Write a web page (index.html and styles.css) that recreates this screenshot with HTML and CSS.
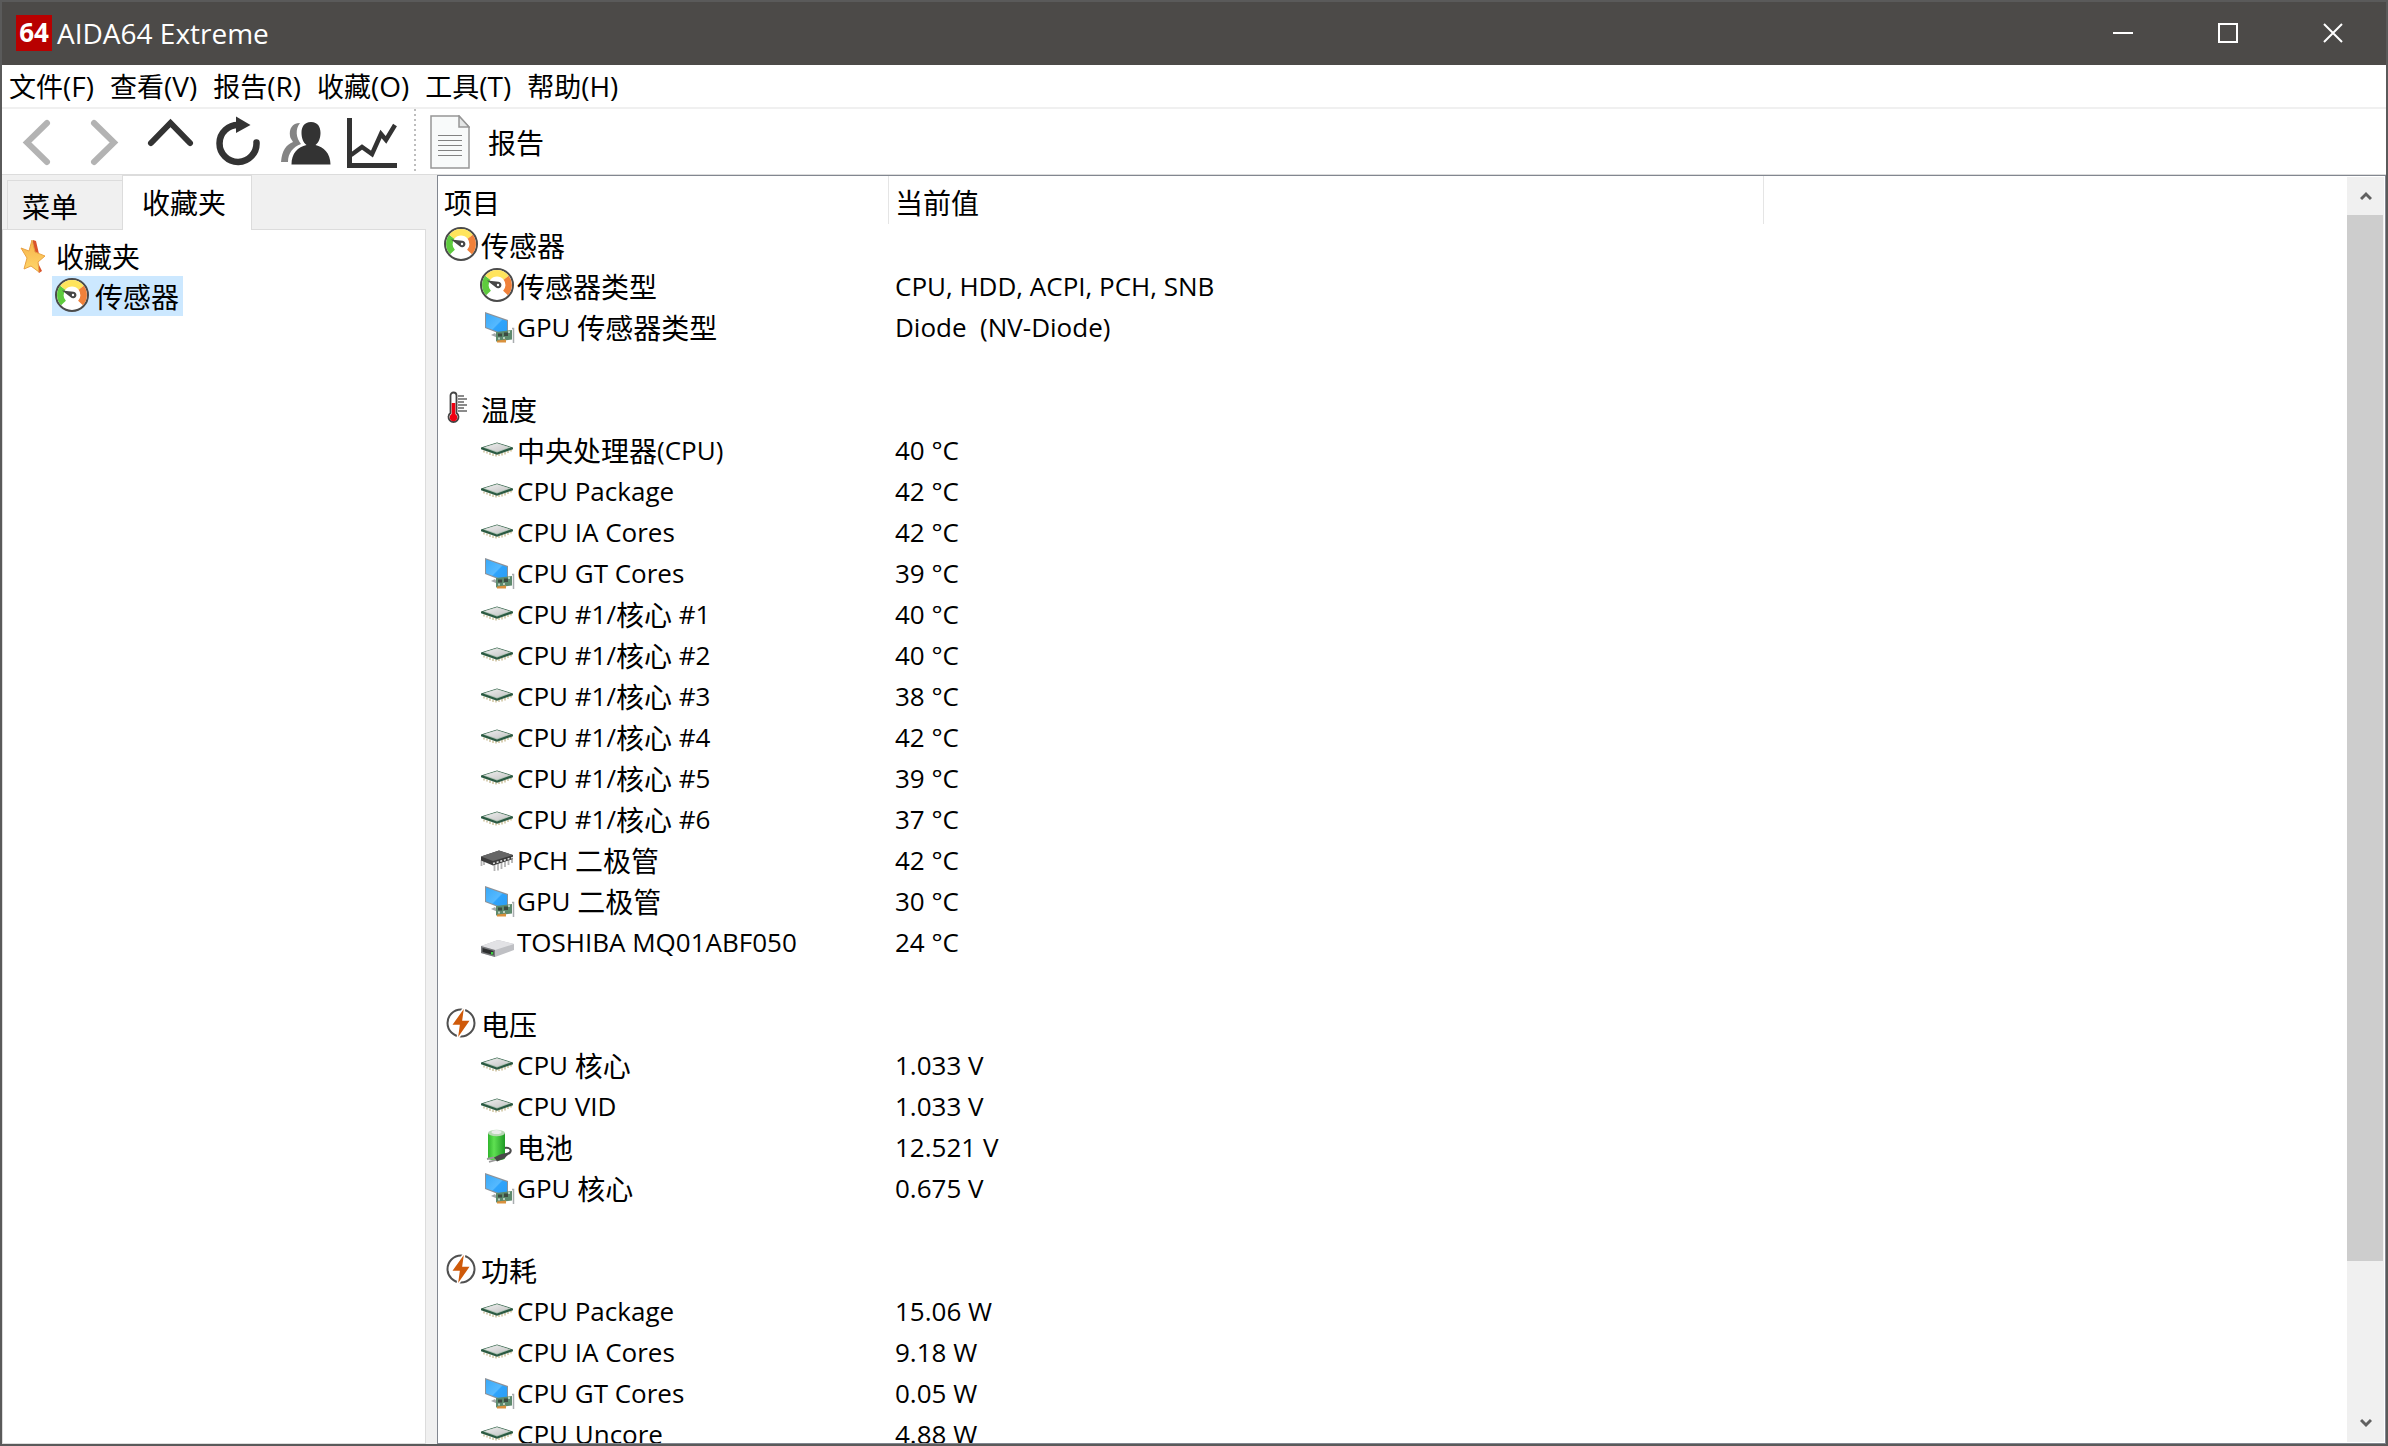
FILE: index.html
```html
<!DOCTYPE html>
<html lang="zh-CN">
<head>
<meta charset="utf-8">
<title>AIDA64 Extreme</title>
<link rel="stylesheet" href="styles.css">
</head>
<body>
<svg class="sprite" aria-hidden="true">
  <defs>
    <linearGradient id="screen" x1="0" y1="0" x2="1" y2="1"><stop offset="0" stop-color="#3aa9f7"/><stop offset=".5" stop-color="#55b9ff"/><stop offset=".55" stop-color="#2ea3fb"/><stop offset="1" stop-color="#2c9df5"/></linearGradient>
    <linearGradient id="starfill" x1="0" y1="0" x2="0" y2="1"><stop offset="0" stop-color="#f6b24a"/><stop offset="1" stop-color="#ffd76a"/></linearGradient>
    <linearGradient id="cell" x1="0" y1="0" x2="1" y2="0"><stop offset="0" stop-color="#2fb52c"/><stop offset=".35" stop-color="#5fe052"/><stop offset="1" stop-color="#1f9a25"/></linearGradient>
    <linearGradient id="lid" x1="0" y1="0" x2="1" y2="1"><stop offset="0" stop-color="#eeeeee"/><stop offset="1" stop-color="#c4c4c4"/></linearGradient>
  </defs>
  <symbol id="gauge" viewBox="0 0 36 36">
    <circle cx="18" cy="17" r="16" fill="#fff" stroke="#4b4b4b" stroke-width="2"/>
    <g fill="none" stroke-width="6.500">
      <path d="M9.500 25A11.700 11.700 0 0 1 8.800 9.800" stroke="#5ecb3e"/>
      <path d="M8.800 9.800A11.700 11.700 0 0 1 27.200 9.800" stroke="#ffe45c"/>
      <path d="M27.200 9.800A11.700 11.700 0 0 1 26.500 25" stroke="#f0813a"/>
    </g>
    <path d="M8 12.500l11.500 1.200a3.300 3.300 0 1 1-2.800 5.500z" fill="#474747"/>
    <circle cx="19" cy="17" r="1.200" fill="#fff"/>
  </symbol>
  <symbol id="gpu" viewBox="0 0 36 36">
    <path d="M6 3l23 8v17L6 19z" fill="#8d9299"/>
    <path d="M7 4.600l21 7.300v14.400L7 18.200z" fill="url(#screen)"/>
    <path d="M16 24l-4 2 7 3z" fill="#a5a8ab"/>
    <path d="M17 23l16-2v9.500l-16 2z" fill="#5d8a6d"/>
    <path d="M19 24.500h4v3h-4zM25 23.500h4v3.500h-4z" fill="#3c4a41"/>
    <path d="M19 28.500h2v2h-2zM24 28h2v2h-2zM29 22h2v2h-2z" fill="#b9cdbf"/>
    <path d="M18 31.500l9-1v3h-9z" fill="#d9913d"/>
    <path d="M33 19.500h1.500v14.500" fill="none" stroke="#a9adb0" stroke-width="1.500"/>
  </symbol>
  <symbol id="cpu" viewBox="0 0 36 36">
    <path d="M5 18.500v2M8 19.500v2M11 20.500v2.500M14 21.500v2.500M17 22v2.500M20 22v2M23 21v2.500M26 20v2.500M29 19v2M32 17.500v2" stroke="#b5a36c"/>
    <path d="M2 15.500l16-5 16 5v1.800l-16 5.500-16-5.500z" fill="#2b5a42"/>
    <path d="M4 15.500l14-4.600 14 4.600-14 4.900z" fill="#a9bfb0"/>
    <path d="M5.500 15.300l12.500-3.900 12.500 3.900-12.500 4.200z" fill="url(#lid)"/>
  </symbol>
  <symbol id="chip" viewBox="0 0 36 36">
    <path d="M2.500 18v6M5 19v4M15.500 22v7M19 21v7.500M22.500 20v7M26 18.500v6.500M29.500 17v6M33 15v6" stroke="#b3b3b3" stroke-width="1.800"/>
    <path d="M2 14.500L20 8.500l14 4.500v4L14 23.500 2 18.500z" fill="#3c3c3c"/>
    <path d="M2 14.500L20 8.500l14 4.500-20 6z" fill="#666"/>
    <path d="M14 21.500l20-6" stroke="#e2e2e2" stroke-width="1.500" stroke-dasharray="2 1.800"/>
  </symbol>
  <symbol id="disk" viewBox="0 0 36 36">
    <path d="M2 22l17-6 16 4v6l-19 7-14-4z" fill="#bfc0c4"/>
    <path d="M2 22l17-6 16 4-19 6z" fill="#e2e2e5"/>
    <path d="M2 22l14 4v7l-14-4z" fill="#77797c"/>
    <path d="M3.500 24l11 3v4l-11-3z" fill="#2d2f30"/>
    <path d="M12 28h2v2.500h-2z" fill="#3bd13f"/>
  </symbol>
  <symbol id="bolt" viewBox="0 0 36 36">
    <circle cx="18" cy="17" r="13.500" fill="none" stroke="#505050" stroke-width="2"/>
    <path d="M22 0L8 19.500h8L14 34l14-20h-8z" fill="#cf5a0a" stroke="#fff" stroke-width="1.500"/>
  </symbol>
  <symbol id="battery" viewBox="0 0 36 36">
    <path d="M25 19c8-1 9 4 2 7" fill="none" stroke="#4b4b4b" stroke-width="2"/>
    <path d="M9 4h17v25a8.500 2.500 0 0 1-17 0z" fill="url(#cell)"/>
    <ellipse cx="17.500" cy="4" rx="8.500" ry="3.200" fill="#b9d8b6"/>
    <ellipse cx="17.500" cy="3" rx="5" ry="2" fill="#ececec"/>
    <path d="M31 23l-5 6-8 3.500-3-4 6-3z" fill="#484848"/>
    <path d="M15 28.500l-7 1.500M17 31l-7 1.800" stroke="#999" stroke-width="1.800"/>
  </symbol>
  <symbol id="thermometer" viewBox="0 0 36 36">
    <path d="M7.500 22V4.500a3 3 0 0 1 6 0V22a5 5 0 1 1-6 0z" fill="#fff" stroke="#444" stroke-width="1.800"/>
    <path d="M10.500 12v14" stroke="#f00010" stroke-width="3.600"/>
    <circle cx="10.500" cy="26.500" r="3.700" fill="#f00010"/>
    <path d="M15 5h6M15 8h9M15 11h6M15 14h9M15 17h6M15 20h9" stroke="#666" stroke-width="1.400"/>
  </symbol>
  <symbol id="star" viewBox="0 0 28 36">
    <path d="M14 2l3 1 3 13-1 9 4 8-3 2-6-12z" fill="#d9532b"/>
    <path d="M13 2l3 12 10 4-7 6 1 10-8-6-7 3 3-11-6-10 8 3z" fill="url(#starfill)" stroke="#e9a243"/>
  </symbol>
</svg>

<div class="window">
  <header class="titlebar">
    <svg class="logo" viewBox="0 0 36 36" aria-hidden="true"><rect width="36" height="36" fill="#b80000"/><text class="logo-text" x="18" y="27" text-anchor="middle">64</text></svg>
    <h1 class="title">AIDA64 Extreme</h1>
    <div class="window-buttons">
      <button type="button" aria-label="最小化"><svg viewBox="0 0 20 20"><path d="M0 10h20" stroke-width="2"/></svg></button>
      <button type="button" aria-label="最大化"><svg viewBox="0 0 20 20"><path d="M1 1h18v18H1z" stroke-width="2"/></svg></button>
      <button type="button" aria-label="关闭"><svg viewBox="0 0 20 20"><path d="M1 1l18 18M19 1L1 19" stroke-width="2"/></svg></button>
    </div>
  </header>

  <nav class="menubar">
    <button type="button"><span class="zh">文件</span>(F)</button>
    <button type="button"><span class="zh">查看</span>(V)</button>
    <button type="button"><span class="zh">报告</span>(R)</button>
    <button type="button"><span class="zh">收藏</span>(O)</button>
    <button type="button"><span class="zh">工具</span>(T)</button>
    <button type="button"><span class="zh">帮助</span>(H)</button>
  </nav>

  <div class="toolbar">
    <button type="button" class="tool" aria-label="后退"><svg viewBox="0 0 56 56"><path d="M36 10L16 29.500 36 49" fill="none" stroke="#b3b3b3" stroke-width="6" stroke-linecap="round"/></svg></button>
    <button type="button" class="tool" aria-label="前进"><svg viewBox="0 0 56 56"><path d="M16 10l20 19.500L16 49" fill="none" stroke="#b3b3b3" stroke-width="6" stroke-linecap="round"/></svg></button>
    <button type="button" class="tool" aria-label="上一级"><svg viewBox="0 0 56 56"><path d="M6 30L25.500 10 45 30" fill="none" stroke="#333" stroke-width="6" stroke-linecap="round"/></svg></button>
    <button type="button" class="tool" aria-label="刷新"><svg viewBox="0 0 56 56"><path d="M27 12A18.500 18.500 0 1 0 44.500 29.500" fill="none" stroke="#333" stroke-width="6.500" stroke-linecap="round"/><path d="M24 3.500l14.500 8.500L24 20z" fill="#333"/></svg></button>
    <button type="button" class="tool" aria-label="用户"><svg viewBox="0 0 56 56"><path d="M21 10c-8 0-11 6-10 13 0 2 2 4 3 6-7 3-11 8-12 20h7c0-9 5-15 13-18-5-6-6-15-1-21z" fill="#848484"/><path d="M32 9c7 0 9.500 5 9.500 11 0 5-2 10-5 12 8 2 15 8 15 19.500h-39C12.500 40 19 34 27.500 32c-3-2-5-7-5-12C22.500 14 25 9 32 9z" fill="#333"/></svg></button>
    <button type="button" class="tool" aria-label="图表"><svg viewBox="0 0 56 56"><path d="M3.500 5v47.500H51" fill="none" stroke="#333" stroke-width="5"/><path d="M5 42l11-8 10 7 9-20 5 6 9-15" fill="none" stroke="#333" stroke-width="4.500"/></svg></button>
    <span class="divider"></span>
    <button type="button" class="report">
      <svg viewBox="0 0 40 54" aria-hidden="true"><path d="M1 1h28l10 11v41H1z" fill="#f8fafa" stroke="#969696" stroke-width="1.500"/><path d="M29 1v11h10z" fill="#e4e6e6" stroke="#969696" stroke-width="1.500"/><path d="M8 20.500h24M8 25.500h24M8 30.500h24M8 35.500h24M8 40.500h24" stroke="#828282"/></svg>
      <span class="zh">报告</span>
    </button>
  </div>

  <main class="workspace">
    <aside class="sidebar">
      <div class="tabs" role="tablist">
        <button type="button" class="tab zh" role="tab" aria-selected="false">菜单</button>
        <button type="button" class="tab active zh" role="tab" aria-selected="true">收藏夹</button>
      </div>
      <ul class="tree">
        <li><a class="node zh" href="#favorites"><svg class="star" aria-hidden="true"><use href="#star"/></svg>收藏夹</a>
          <ul>
            <li><a class="node selected zh" href="#sensors"><svg class="icon" aria-hidden="true"><use href="#gauge"/></svg>传感器</a></li>
          </ul>
        </li>
      </ul>
    </aside>

    <section class="pane">
      <div class="list">
        <table class="sensors">
          <colgroup><col class="col-item"><col class="col-value"><col></colgroup>
          <thead><tr><th scope="col" class="zh">项目</th><th scope="col" class="zh">当前值</th><th></th></tr></thead>
          <tbody>
            <tr class="group"><th scope="row"><svg class="icon"><use href="#gauge"/></svg><span class="zh">传感器</span></th><td></td></tr>
            <tr><th scope="row"><svg class="icon"><use href="#gauge"/></svg><span class="zh">传感器类型</span></th><td>CPU, HDD, ACPI, PCH, SNB</td></tr>
            <tr><th scope="row"><svg class="icon"><use href="#gpu"/></svg>GPU <span class="zh">传感器类型</span></th><td>Diode&nbsp; (NV-Diode)</td></tr>
          </tbody>
          <tbody>
            <tr class="group"><th scope="row"><svg class="icon"><use href="#thermometer"/></svg><span class="zh">温度</span></th><td></td></tr>
            <tr><th scope="row"><svg class="icon"><use href="#cpu"/></svg><span class="zh">中央处理器</span>(CPU)</th><td>40 °C</td></tr>
            <tr><th scope="row"><svg class="icon"><use href="#cpu"/></svg>CPU Package</th><td>42 °C</td></tr>
            <tr><th scope="row"><svg class="icon"><use href="#cpu"/></svg>CPU IA Cores</th><td>42 °C</td></tr>
            <tr><th scope="row"><svg class="icon"><use href="#gpu"/></svg>CPU GT Cores</th><td>39 °C</td></tr>
            <tr><th scope="row"><svg class="icon"><use href="#cpu"/></svg>CPU #1/<span class="zh">核心</span> #1</th><td>40 °C</td></tr>
            <tr><th scope="row"><svg class="icon"><use href="#cpu"/></svg>CPU #1/<span class="zh">核心</span> #2</th><td>40 °C</td></tr>
            <tr><th scope="row"><svg class="icon"><use href="#cpu"/></svg>CPU #1/<span class="zh">核心</span> #3</th><td>38 °C</td></tr>
            <tr><th scope="row"><svg class="icon"><use href="#cpu"/></svg>CPU #1/<span class="zh">核心</span> #4</th><td>42 °C</td></tr>
            <tr><th scope="row"><svg class="icon"><use href="#cpu"/></svg>CPU #1/<span class="zh">核心</span> #5</th><td>39 °C</td></tr>
            <tr><th scope="row"><svg class="icon"><use href="#cpu"/></svg>CPU #1/<span class="zh">核心</span> #6</th><td>37 °C</td></tr>
            <tr><th scope="row"><svg class="icon"><use href="#chip"/></svg>PCH <span class="zh">二极管</span></th><td>42 °C</td></tr>
            <tr><th scope="row"><svg class="icon"><use href="#gpu"/></svg>GPU <span class="zh">二极管</span></th><td>30 °C</td></tr>
            <tr><th scope="row"><svg class="icon"><use href="#disk"/></svg>TOSHIBA MQ01ABF050</th><td>24 °C</td></tr>
          </tbody>
          <tbody>
            <tr class="group"><th scope="row"><svg class="icon"><use href="#bolt"/></svg><span class="zh">电压</span></th><td></td></tr>
            <tr><th scope="row"><svg class="icon"><use href="#cpu"/></svg>CPU <span class="zh">核心</span></th><td>1.033 V</td></tr>
            <tr><th scope="row"><svg class="icon"><use href="#cpu"/></svg>CPU VID</th><td>1.033 V</td></tr>
            <tr><th scope="row"><svg class="icon"><use href="#battery"/></svg><span class="zh">电池</span></th><td>12.521 V</td></tr>
            <tr><th scope="row"><svg class="icon"><use href="#gpu"/></svg>GPU <span class="zh">核心</span></th><td>0.675 V</td></tr>
          </tbody>
          <tbody>
            <tr class="group"><th scope="row"><svg class="icon"><use href="#bolt"/></svg><span class="zh">功耗</span></th><td></td></tr>
            <tr><th scope="row"><svg class="icon"><use href="#cpu"/></svg>CPU Package</th><td>15.06 W</td></tr>
            <tr><th scope="row"><svg class="icon"><use href="#cpu"/></svg>CPU IA Cores</th><td>9.18 W</td></tr>
            <tr><th scope="row"><svg class="icon"><use href="#gpu"/></svg>CPU GT Cores</th><td>0.05 W</td></tr>
            <tr><th scope="row"><svg class="icon"><use href="#cpu"/></svg>CPU Uncore</th><td>4.88 W</td></tr>
          </tbody>
        </table>
      </div>
      <div class="scrollbar">
        <button type="button" aria-label="向上滚动"><svg viewBox="0 0 12 10"><path d="M1 8l5-5 5 5"/></svg></button>
        <div class="track"><div class="thumb"></div></div>
        <button type="button" aria-label="向下滚动"><svg viewBox="0 0 12 10"><path d="M1 2l5 5 5-5"/></svg></button>
      </div>
    </section>
  </main>
</div>
</body>
</html>
```
FILE: styles.css
```css
* { box-sizing: border-box; }

body {
  margin: 0;
  font: 26px/40px "Open Sans", "Noto Sans CJK SC", sans-serif;
  color: #000;
}

button {
  margin: 0;
  padding: 0;
  border: 0;
  background: none;
  font: inherit;
  color: inherit;
}

svg { display: block; }

.sprite {
  position: absolute;
  width: 0;
  height: 0;
}

.zh {
  font-family: "Noto Sans CJK SC", sans-serif;
  font-size: 28px;
}

.window {
  display: flex;
  flex-direction: column;
  height: 100vh;
  border: 2px solid #5a5a5a;
  background: #fff;
}

/* Title bar */
.titlebar {
  display: flex;
  flex: none;
  align-items: center;
  height: 63px;
  padding: 0 1px 2px 14px;
  background: #4c4a48;
  color: #fff;
}

.logo {
  width: 36px;
  height: 36px;
}

.logo-text {
  font: bold 26px "Open Sans", sans-serif;
  fill: #fff;
}

.title {
  flex: 1;
  margin: 0;
  padding-left: 5px;
  font: 28px/40px "Open Sans", sans-serif;
}

.window-buttons { display: flex; }

.window-buttons button {
  display: grid;
  place-items: center;
  width: 105px;
  height: 61px;
}

.window-buttons svg {
  width: 20px;
  height: 20px;
  fill: none;
  stroke: #fff;
}

/* Menu bar */
.menubar {
  display: flex;
  flex: none;
  gap: 16px;
  height: 44px;
  padding-left: 7px;
  border-bottom: 2px solid #f0f0f0;
  font-size: 28px;
}

.menubar .zh { font-size: 27px; }

/* Tool bar */
.toolbar {
  display: flex;
  flex: none;
  height: 66px;
  padding-left: 9px;
  border-bottom: 1px solid #dcdcdc;
}

.tool {
  width: 67px;
  padding-bottom: 2px;
}

.tool svg {
  width: 56px;
  height: 56px;
}

.divider {
  width: 2px;
  margin-left: 1px;
  background: repeating-linear-gradient(#bdbdbd 0 2px, #fff 2px 5px);
}

.report {
  display: flex;
  align-items: center;
  gap: 18px;
  padding-left: 14px;
}

.report svg {
  width: 40px;
  height: 54px;
}

/* Work area */
.workspace {
  display: flex;
  flex: 1;
  min-height: 0;
  background: #f0f0f0;
}

.sidebar {
  display: flex;
  flex-direction: column;
  flex: none;
  width: 435px;
  padding-right: 11px;
}

.tabs {
  display: flex;
  align-items: flex-end;
  height: 54px;
  padding-left: 5px;
}

.tab {
  width: 115px;
  height: 49px;
  padding: 2px 0 0 14px;
  border: 1px solid #dcdcdc;
  border-width: 1px 0 0 1px;
  text-align: left;
}

.tab.active {
  z-index: 1;
  width: 130px;
  height: 55px;
  margin-bottom: -1px;
  padding: 0 0 2px 19px;
  border-right-width: 1px;
  background: #fff;
}

.tree {
  flex: 1;
  border: 1px solid #dcdcdc;
  background: #fff;
  padding: 6px 0 0 16px;
}

.tree, .tree ul {
  margin: 0;
  list-style: none;
}

.tree ul { padding: 0 0 0 33px; }

.node {
  display: flex;
  align-items: center;
  width: max-content;
  height: 40px;
  color: #000;
  text-decoration: none;
}

.node .star {
  width: 28px;
  height: 36px;
  margin-right: 9px;
}

.node .icon { margin: 0 5px 0 2px; }

.node.selected {
  padding-right: 4px;
  background: #cce8ff;
}

.icon {
  flex: none;
  width: 36px;
  height: 36px;
}

/* Sensor list */
.pane {
  display: flex;
  flex: 1;
  min-width: 0;
  border: 1px solid #828790;
  background: #fff;
}

.list {
  flex: 1;
  min-width: 0;
  overflow: hidden;
}

.sensors {
  width: 100%;
  table-layout: fixed;
  border-spacing: 0;
  text-align: left;
}

.col-item { width: 451px; }
.col-value { width: 875px; }

.sensors th, .sensors td {
  padding: 0 0 0 6px;
  font-weight: normal;
  white-space: nowrap;
}

.sensors thead th {
  height: 48px;
  padding-top: 3px;
  background: linear-gradient(#e5e5e5, #e5e5e5) right / 1px 100% no-repeat;
}

.sensors thead th:last-child { background: none; }

.sensors tbody td { height: 41px; }

.sensors tbody th {
  display: flex;
  align-items: center;
  height: 41px;
  padding-left: 41px;
  white-space: pre;
}

.sensors tbody .group th { padding-left: 5px; }

.sensors tbody .icon { margin-right: 2px; }

.sensors tbody + tbody::before {
  content: "";
  display: table-row;
  height: 41px;
}

/* Scroll bar */
.scrollbar {
  display: flex;
  flex-direction: column;
  flex: none;
  width: 37px;
  margin: 1px;
  background: #f0f0f0;
}

.scrollbar button {
  display: grid;
  place-items: center;
  height: 38px;
}

.scrollbar svg {
  width: 12px;
  height: 10px;
  fill: none;
  stroke: #606060;
  stroke-width: 3;
}

.track { flex: 1; }

.thumb {
  width: 36px;
  height: 88%;
  background: #cdcdcd;
}
```
